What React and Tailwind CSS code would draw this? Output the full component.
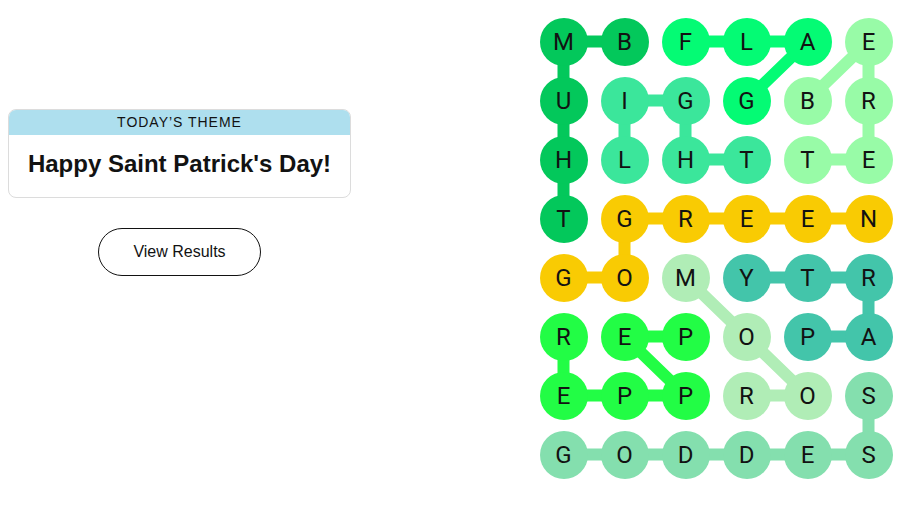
import React from 'react'

const CELL_W = 61
const CELL_H = 59

const LETTERS = [
  'MBFLAE',
  'UIGGBR',
  'HLHTTE',
  'TGREEN',
  'GOMYTR',
  'REPOPA',
  'EPPROS',
  'GODDES',
]

// colour for each cell, by word
const C = {
  thumb: '#03c85b',
  flag: '#04fb74',
  light: '#3be69b',
  beret: '#98fba7',
  gogreen: '#f9cb03',
  room: '#b0edb6',
  party: '#43c5aa',
  pepper: '#22fd45',
  goddess: '#84dfae',
}

const COLORS = [
  ['thumb', 'thumb', 'flag', 'flag', 'flag', 'beret'],
  ['thumb', 'light', 'light', 'flag', 'beret', 'beret'],
  ['thumb', 'light', 'light', 'light', 'beret', 'beret'],
  ['thumb', 'gogreen', 'gogreen', 'gogreen', 'gogreen', 'gogreen'],
  ['gogreen', 'gogreen', 'room', 'party', 'party', 'party'],
  ['pepper', 'pepper', 'pepper', 'room', 'party', 'party'],
  ['pepper', 'pepper', 'pepper', 'room', 'room', 'goddess'],
  ['goddess', 'goddess', 'goddess', 'goddess', 'goddess', 'goddess'],
]

// each path as list of [col,row]
const PATHS = [
  ['thumb', [[0, 3], [0, 2], [0, 1], [0, 0], [1, 0]]],
  ['flag', [[2, 0], [3, 0], [4, 0], [3, 1]]],
  ['light', [[1, 2], [1, 1], [2, 1], [2, 2], [3, 2]]],
  ['beret', [[4, 1], [5, 0], [5, 1], [5, 2], [4, 2]]],
  ['gogreen', [[0, 4], [1, 4], [1, 3], [2, 3], [3, 3], [4, 3], [5, 3]]],
  ['room', [[3, 6], [4, 6], [3, 5], [2, 4]]],
  ['party', [[4, 5], [5, 5], [5, 4], [4, 4], [3, 4]]],
  ['pepper', [[2, 5], [1, 5], [2, 6], [1, 6], [0, 6], [0, 5]]],
  ['goddess', [[0, 7], [1, 7], [2, 7], [3, 7], [4, 7], [5, 7], [5, 6]]],
]

const cx = (c) => c * CELL_W + CELL_W / 2
const cy = (r) => r * CELL_H + CELL_H / 2

const Board = () => {
  return (
    <div className="relative w-[366px] h-[472px]">
      <svg className="absolute inset-0" width="366" height="472">
        {PATHS.map(([word, pts]) => (
          <polyline
            key={word}
            points={pts.map(([c, r]) => `${cx(c)},${cy(r)}`).join(' ')}
            fill="none"
            stroke={C[word]}
            strokeWidth="12"
            strokeLinejoin="round"
          />
        ))}
      </svg>
      <div className="relative grid grid-cols-[repeat(6,61px)] grid-rows-[repeat(8,59px)]">
        {LETTERS.map((row, r) =>
          row.split('').map((ch, c) => (
            <div key={`${r}-${c}`} className="flex items-center justify-center">
              <div
                className="w-12 h-12 rounded-full flex items-center justify-center text-[24px] text-[#121212] font-['Roboto',sans-serif]"
                style={{ backgroundColor: C[COLORS[r][c]] }}
              >
                {ch}
              </div>
            </div>
          ))
        )}
      </div>
    </div>
  )
}

export default function App() {
  return (
    <div className="w-[905px] h-[509px] bg-white flex font-['Liberation_Sans',Arial,sans-serif] text-[#121212]">
      {/* Tema y botón */}
      <div className="w-[343px] ml-2 pt-[109px] flex flex-col items-center shrink-0">
        <div className="w-[343px] rounded-lg border border-[#dcdcdc] overflow-hidden">
          <div className="bg-[#aedfee] h-[25px] flex items-center justify-center text-[14px] tracking-[0.07em] uppercase">
            Today’s Theme
          </div>
          <div className="h-[62px] flex items-center justify-center text-[24px] font-bold pb-1">
            Happy Saint Patrick's Day!
          </div>
        </div>
        <button className="mt-[30px] w-[163px] h-[48px] rounded-full border border-[#121212] text-[16px] bg-white">
          View Results
        </button>
      </div>

      {/* Tablero */}
      <div className="ml-[182px] mt-[12px]">
        <Board />
      </div>
    </div>
  )
}
